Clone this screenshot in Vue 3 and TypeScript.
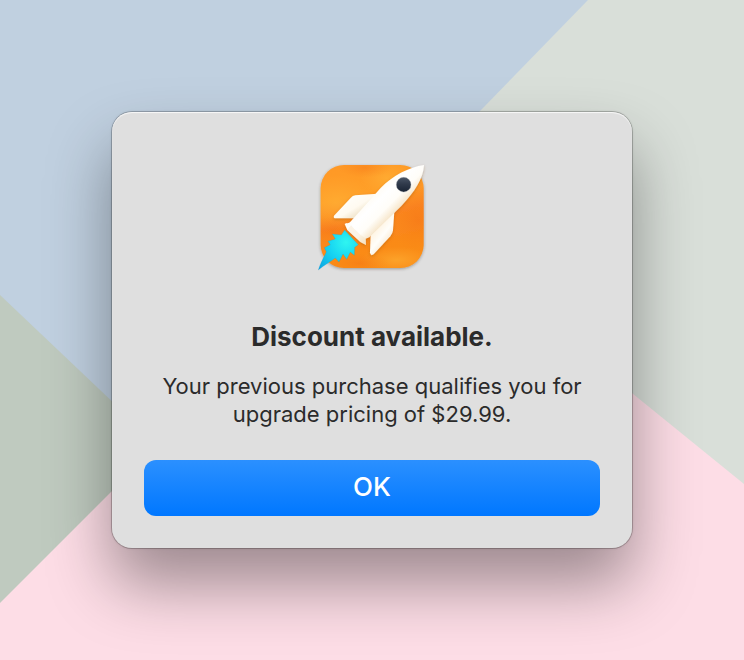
<script setup lang="ts">
import { ref } from 'vue'

interface AlertContent {
  title: string
  message: string
  action: string
}

const content: AlertContent = {
  title: 'Discount available.',
  message: 'Your previous purchase qualifies you for upgrade pricing of $29.99.',
  action: 'OK',
}

const open = ref(true)
</script>

<template>
  <main class="desktop">
    <svg class="wallpaper" viewBox="0 0 744 660" preserveAspectRatio="none" aria-hidden="true">
      <rect width="744" height="660" fill="#c0d0e0" />
      <polygon points="588,0 744,0 744,660 372,660 372,222" fill="#d9dfd9" />
      <polygon points="0,295 158,445 158,660 0,660" fill="#bfcabf" />
      <polygon points="0,603 399,204 744,484 744,660 0,660" fill="#fddde6" />
    </svg>

    <section
      v-if="open"
      class="alert"
      role="alertdialog"
      aria-labelledby="alert-title"
      aria-describedby="alert-message"
    >
      <svg class="app-icon" viewBox="-6 -9 384 384" aria-hidden="true">
        <defs>
          <linearGradient id="tile" x1="0" y1="0" x2="0.25" y2="1">
            <stop offset="0" stop-color="#ff9826" />
            <stop offset="0.35" stop-color="#ff9e28" />
            <stop offset="0.6" stop-color="#fb8620" />
            <stop offset="1" stop-color="#fa8c14" />
          </linearGradient>
          <radialGradient id="glow">
            <stop offset="0" stop-color="#ffb83c" stop-opacity="0.5" />
            <stop offset="1" stop-color="#ffb03a" stop-opacity="0" />
          </radialGradient>
          <radialGradient id="ember">
            <stop offset="0" stop-color="#f26a14" stop-opacity="0.35" />
            <stop offset="1" stop-color="#f47a18" stop-opacity="0" />
          </radialGradient>
          <linearGradient id="hull" gradientUnits="userSpaceOnUse" x1="185" y1="105" x2="260" y2="180">
            <stop offset="0" stop-color="#fffaf0" />
            <stop offset="0.35" stop-color="#ffffff" />
            <stop offset="0.65" stop-color="#fffdf8" />
            <stop offset="1" stop-color="#f4dfbd" />
          </linearGradient>
          <linearGradient id="fin-left" gradientUnits="userSpaceOnUse" x1="115" y1="125" x2="155" y2="190">
            <stop offset="0" stop-color="#fffefa" />
            <stop offset="0.5" stop-color="#fffaf0" />
            <stop offset="1" stop-color="#e9d9b8" />
          </linearGradient>
          <linearGradient id="fin-right" gradientUnits="userSpaceOnUse" x1="190" y1="225" x2="240" y2="265">
            <stop offset="0" stop-color="#fff3df" />
            <stop offset="0.5" stop-color="#fffefa" />
            <stop offset="1" stop-color="#f8e7cd" />
          </linearGradient>
          <radialGradient id="flame" gradientUnits="userSpaceOnUse" cx="108" cy="262" r="120">
            <stop offset="0" stop-color="#2ff5f1" />
            <stop offset="0.45" stop-color="#16d3f2" />
            <stop offset="1" stop-color="#0a9fe0" />
          </radialGradient>
          <linearGradient id="porthole" x1="0" y1="0" x2="0" y2="1">
            <stop offset="0" stop-color="#4a5566" />
            <stop offset="0.45" stop-color="#303a4b" />
            <stop offset="1" stop-color="#1a2434" />
          </linearGradient>
          <clipPath id="tile-clip">
            <rect x="32" y="30" width="309" height="309" rx="70" />
          </clipPath>
          <filter id="soft-shadow" x="-20%" y="-20%" width="140%" height="140%">
            <feDropShadow dx="0" dy="3" stdDeviation="4" flood-color="#3a3028" flood-opacity="0.4" />
          </filter>
          <filter id="rocket-shadow" x="-20%" y="-20%" width="140%" height="140%">
            <feDropShadow dx="0" dy="4" stdDeviation="5" flood-color="#8a4a10" flood-opacity="0.35" />
          </filter>
        </defs>

        <rect x="32" y="30" width="309" height="309" rx="70" fill="url(#tile)" filter="url(#soft-shadow)" />
        <g clip-path="url(#tile-clip)">
          <ellipse cx="80" cy="145" rx="120" ry="85" fill="url(#glow)" />
          <ellipse cx="230" cy="70" rx="80" ry="55" fill="url(#glow)" />
          <ellipse cx="165" cy="38" rx="80" ry="30" fill="url(#ember)" />
          <ellipse cx="70" cy="225" rx="110" ry="40" fill="url(#ember)" />
          <ellipse cx="325" cy="195" rx="80" ry="100" fill="url(#ember)" />
          <ellipse cx="260" cy="315" rx="110" ry="40" fill="url(#glow)" />
          <ellipse cx="150" cy="325" rx="90" ry="30" fill="url(#ember)" />
        </g>

        <path
          d="M104 225 L145 269 L134 277 L133 301 L121 291 L110 313 L99 297 L87 321 L76 309 C62 320 43 330 25 345 C30 326 42 307 49 290 L43 278 L61 269 L54 259 L76 252 L67 237 L94 240 Z"
          fill="url(#flame)"
          stroke="#078fc9"
          stroke-opacity="0.35"
          stroke-width="1.5"
          stroke-linejoin="round"
        />

        <g filter="url(#rocket-shadow)">
          <path
            d="M203 116 L136 121 Q128 122 122 129 L72 182 Q69 190 78 190 L136 190 Z"
            fill="url(#fin-left)"
          />
          <path
            d="M253 169 L249 226 Q248 236 241 244 L191 298 Q181 305 180 292 L182 240 Z"
            fill="url(#fin-right)"
          />
          <path
            d="M342 30 C298 36 248 62 212 99 L120 202 C114 207 110 203 104 207 L112 225 L151 261 L168 270 L167 251 L178 247 L274 153 C314 111 340 71 342 30 Z"
            fill="url(#hull)"
          />
        </g>
        <path d="M112 225 L151 261 L168 270 L167 251 C157 245 134 224 123 211 Z" fill="#f3e0bd" opacity="0.35" />
        <circle cx="281" cy="89" r="22" fill="url(#porthole)" stroke="#a3a6aa" stroke-width="1" />
      </svg>

      <h1 id="alert-title" class="title">{{ content.title }}</h1>
      <p id="alert-message" class="message">{{ content.message }}</p>
      <button class="confirm" type="button" @click="open = false">{{ content.action }}</button>
    </section>
  </main>
</template>

<style>
body {
  margin: 0;
}
</style>

<style scoped>
.desktop {
  position: relative;
  display: flex;
  align-items: center;
  justify-content: center;
  box-sizing: border-box;
  min-height: 100vh;
  padding: 32px;
  overflow: hidden;
  font-family: Inter, "Liberation Sans", sans-serif;
}

.wallpaper {
  position: absolute;
  inset: 0;
  width: 100%;
  height: 100%;
}

.alert {
  position: relative;
  display: flex;
  flex-direction: column;
  align-items: center;
  box-sizing: border-box;
  width: 100%;
  max-width: 520px;
  padding: 40px 32px 32px;
  border-radius: 20px;
  background: #dfdfdf;
  color: #2b2b2b;
  text-align: center;
  box-shadow:
    inset 0 1px 1px rgba(255, 255, 255, 0.8),
    0 0 0 1px rgba(0, 0, 0, 0.2),
    0 0 3px rgba(0, 0, 0, 0.15),
    0 36px 64px rgba(0, 0, 0, 0.38);
}

.app-icon {
  width: 128px;
  height: 128px;
}

.title {
  margin: 40px 0 0;
  font-size: 26px;
  font-weight: 700;
  line-height: 34px;
}

.message {
  margin: 18px 0 0;
  font-size: 22px;
  line-height: 28px;
}

.confirm {
  width: 100%;
  height: 56px;
  margin: 32px 0 0;
  padding: 0 0 2px;
  border: 0;
  border-radius: 12px;
  background: linear-gradient(#2b90ff, #0077ff);
  color: #ffffff;
  font-family: inherit;
  font-size: 26px;
  font-weight: 500;
  line-height: 32px;
}
</style>
